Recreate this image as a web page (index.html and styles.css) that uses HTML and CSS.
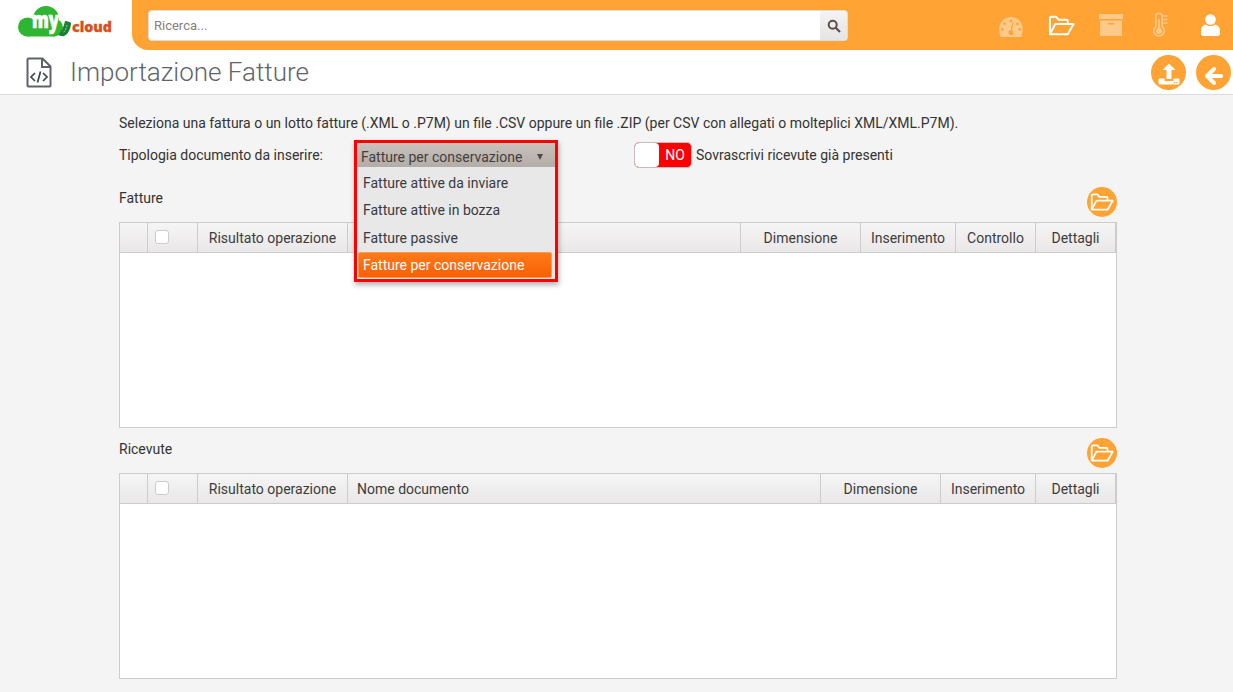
FILE: index.html
```html
<!DOCTYPE html>
<html lang="it">
<head>
<meta charset="utf-8">
<title>Importazione Fatture</title>
<link rel="stylesheet" href="styles.css">
</head>
<body>
<header class="topbar">
  <div class="logo">
    <svg class="logo-svg" width="96" height="34" viewBox="0 0 96 34">
      <g fill="#2fb52f">
        <circle cx="9.500" cy="22" r="9.500"/>
        <circle cx="28" cy="14" r="13"/>
        <circle cx="36" cy="22.500" r="9"/>
        <rect x="9" y="20" width="28" height="11.500"/>
      </g>
      <text class="logo-my" x="14" y="23" textLength="27" lengthAdjust="spacingAndGlyphs">my</text>
      <path fill="#1c7f34" d="M47 16c3 0 5 1 6 2 0 5-3 12-7 13-2 .5-4 0-6-1 3-3 6-8 7-14z"/>
      <path fill="none" stroke="#8fd08f" stroke-width="1" stroke-dasharray="2 1" d="M49 20c-.5 3-2 6-4 8"/>
      <text class="logo-cloud" x="54" y="27" textLength="40" lengthAdjust="spacingAndGlyphs">cloud</text>
    </svg>
  </div>
  <div class="bar">
    <div class="search">
      <span class="search-input">Ricerca...</span>
      <span class="search-btn">
        <svg width="14" height="14" viewBox="0 0 14 14"><circle cx="5.700" cy="5.700" r="4" fill="none" stroke="#5b5048" stroke-width="2"/><path d="M8.700 8.700l4.300 4.300" stroke="#5b5048" stroke-width="2.200"/></svg>
      </span>
    </div>
    <nav class="nav">
      <svg class="nav-icon nav-gauge" width="26" height="20" viewBox="0 0 26 22"><path fill="#ffc98a" fill-rule="evenodd" d="M13 0C6 0 0 6 0 13c0 3 .6 6 1.500 9h23c.9-3 1.500-6 1.500-9 0-7-6-13-13-13zM13 3a1.500 1.500 0 1 1 0 3 1.500 1.500 0 0 1 0-3zM6 6a1.500 1.500 0 1 1 0 3 1.500 1.500 0 0 1 0-3zM20 6a1.500 1.500 0 1 1 0 3 1.500 1.500 0 0 1 0-3zM3.500 12a1.500 1.500 0 1 1 0 3 1.500 1.500 0 0 1 0-3zM22.500 12a1.500 1.500 0 1 1 0 3 1.500 1.500 0 0 1 0-3zM14.500 6l1 .3-1.300 8.500c1 .6 1.500 1.500 1.500 2.500 0 1.600-1.200 2.700-2.700 2.700s-2.700-1.200-2.700-2.700c0-1.300 1-2.400 2.400-2.600z"/></svg>
      <svg class="nav-icon" width="27" height="21" viewBox="0 0 28 21"><path fill="none" stroke="#fff" stroke-width="2" stroke-linejoin="round" d="M2 19V3c0-1 .6-1.500 1.500-1.500h5L11 4.500h8c1 0 1.500.6 1.500 1.500v2.500M2 19.500h18.500L26.500 9H7.500z"/></svg>
      <svg class="nav-icon" width="24" height="22" viewBox="0 0 24 22"><path fill="#ffc98a" fill-rule="evenodd" d="M0 0h24v5H0zM1 6.500h22V22H1zM9 9v1.500h6V9z"/></svg>
      <svg class="nav-icon nav-thermo" width="15" height="26" viewBox="0 0 15 26"><path fill="none" stroke="#ffc98a" stroke-width="1.600" d="M2.800 14.500V4.500a3.200 3.200 0 0 1 6.400 0v10a5.300 5.300 0 1 1-6.400 0zM10.500 4h4M10.500 7.500h4M10.500 11h4"/><circle cx="6" cy="19" r="3" fill="#ffc98a"/><path d="M6 7v11" stroke="#ffc98a" stroke-width="1.800"/></svg>
      <svg class="nav-icon nav-user" width="19" height="22" viewBox="0 0 19 22"><circle cx="9.500" cy="5.500" r="5.300" fill="#fff"/><path fill="#fff" d="M5 10.500c2.500 2 6.500 2 9 0 3 .6 5 3 5 6.500v2.500c0 1.500-1 2.500-2.500 2.500h-14C1 22 0 21 0 19.500V17c0-3.500 2-6 5-6.500z"/></svg>
    </nav>
  </div>
</header>

<section class="titlebar">
  <div class="title-left">
    <svg width="26" height="31" viewBox="0 0 26 31"><path fill="none" stroke="#5f6368" stroke-width="2" stroke-linejoin="round" d="M1.500 2.500c0-.6.400-1 1-1h14l8 8v19c0 .6-.4 1-1 1h-21c-.6 0-1-.4-1-1z"/><path fill="none" stroke="#5f6368" stroke-width="2" d="M16 1.500v8.500h8.500"/><path fill="none" stroke="#3f4347" stroke-width="1.700" d="M9 16l-4 4 4 4M17 16l4 4-4 4M14.500 14.500l-3 11"/></svg>
    <h1 class="title">Importazione Fatture</h1>
  </div>
  <div class="title-actions">
    <span class="round-btn">
      <svg width="24" height="24" viewBox="0 0 24 24"><path fill="#fff" d="M12 2.500L18.500 9h-4v9h-5V9h-4zM1.500 19c0-1 .5-1.500 1.500-1.500h4.500V20h9v-2.500H21c1 0 1.500.5 1.500 1.500v3.500c0 .5-.5 1-1 1h-19c-.5 0-1-.5-1-1z"/><circle cx="17.500" cy="21.500" r=".8" fill="#ffa335"/><circle cx="20" cy="21.500" r=".8" fill="#ffa335"/></svg>
    </span>
    <span class="round-btn">
      <svg class="back-icon" width="22" height="22" viewBox="0 0 22 22"><path fill="none" stroke="#fff" stroke-width="4" stroke-linecap="round" stroke-linejoin="round" d="M11 4l-7 7 7 7M4 11h14"/></svg>
    </span>
  </div>
</section>

<main class="content">
  <p class="intro">Seleziona una fattura o un lotto fatture (.XML o .P7M) un file .CSV oppure un file .ZIP (per CSV con allegati o molteplici XML/XML.P7M).</p>
  <div class="form-row">
    <span class="form-label">Tipologia documento da inserire:</span>
    <div class="select-wrap">
      <div class="dropdown">
        <div class="dropdown-head"><span>Fatture per conservazione</span><span class="caret"></span></div>
        <ul class="dropdown-list">
          <li class="dropdown-item">Fatture attive da inviare</li>
          <li class="dropdown-item">Fatture attive in bozza</li>
          <li class="dropdown-item">Fatture passive</li>
          <li class="dropdown-item dropdown-item-active">Fatture per conservazione</li>
        </ul>
      </div>
    </div>
    <div class="toggle"><span class="toggle-knob"></span><span class="toggle-no">NO</span></div>
    <span class="toggle-label">Sovrascrivi ricevute già presenti</span>
  </div>

  <div class="section-head section-head-first">
    <span>Fatture</span>
    <span class="small-btn"><svg width="24" height="18" viewBox="0 0 28 21"><path fill="none" stroke="#fff" stroke-width="2" stroke-linejoin="round" d="M2 19V3c0-1 .6-1.500 1.500-1.500h5L11 4.500h8c1 0 1.500.6 1.500 1.500v2.500M2 19.500h18.500L26.500 9H7.500z"/></svg></span>
  </div>
  <div class="table">
    <div class="thead thead-fatture">
      <div class="th"></div>
      <div class="th th-check"><span class="checkbox"></span></div>
      <div class="th">Risultato operazione</div>
      <div class="th th-left"></div>
      <div class="th">Dimensione</div>
      <div class="th">Inserimento</div>
      <div class="th">Controllo</div>
      <div class="th">Dettagli</div>
    </div>
  </div>

  <div class="section-head">
    <span>Ricevute</span>
    <span class="small-btn"><svg width="24" height="18" viewBox="0 0 28 21"><path fill="none" stroke="#fff" stroke-width="2" stroke-linejoin="round" d="M2 19V3c0-1 .6-1.500 1.500-1.500h5L11 4.500h8c1 0 1.500.6 1.500 1.500v2.500M2 19.500h18.500L26.500 9H7.500z"/></svg></span>
  </div>
  <div class="table">
    <div class="thead thead-ricevute">
      <div class="th"></div>
      <div class="th th-check"><span class="checkbox"></span></div>
      <div class="th">Risultato operazione</div>
      <div class="th th-left">Nome documento</div>
      <div class="th">Dimensione</div>
      <div class="th">Inserimento</div>
      <div class="th">Dettagli</div>
    </div>
  </div>
</main>
</body>
</html>
```

FILE: styles.css
```css
* { box-sizing: border-box; }
html, body { margin: 0; padding: 0; height: 100%; }
body {
  background: #f4f4f4;
  font-family: Roboto, "Liberation Sans", sans-serif;
  font-size: 14px;
  color: #333;
  overflow: hidden;
}
.topbar { display: flex; height: 50px; background: #fff; }
.logo { width: 132px; flex: none; padding: 5px 0 0 18px; }
.logo-svg { display: block; overflow: visible; }
.logo-my { font: 800 23px "Open Sans", sans-serif; fill: #fff; stroke: #fff; stroke-width: .7px; }
.logo-cloud { font: 800 14px "Open Sans", sans-serif; fill: #d8501e; stroke: #d8501e; stroke-width: .3px; }
.bar {
  flex: 1;
  display: flex;
  align-items: center;
  justify-content: space-between;
  background: #ffa335;
  border-bottom-left-radius: 16px;
  padding: 0 13px 0 16px;
}
.search {
  display: flex;
  width: 700px;
  height: 31px;
  margin-top: 1px;
  background: #fff;
  border: 1px solid #ddd;
  border-radius: 4px;
  overflow: hidden;
}
.search-input { flex: 1; padding: 6px 5px; font-size: 13px; color: #8a8078; line-height: 17px; }
.search-btn {
  width: 27px;
  display: flex;
  align-items: center;
  justify-content: center;
  background: linear-gradient(#f4f4f4, #e6e4e4);
}
.nav { display: flex; align-items: center; gap: 24px; }
.nav-icon { display: block; }
.nav-gauge { margin-top: 3px; }
.nav-thermo { margin-left: 6px; }
.nav-user { margin-left: 9px; }

.titlebar {
  display: flex;
  justify-content: space-between;
  align-items: center;
  height: 45px;
  background: #fff;
  border-bottom: 1px solid #ddd;
  padding: 0 2px 0 26px;
}
.title-left { display: flex; align-items: center; gap: 18px; }
.title { margin: 0; font-size: 26px; font-weight: 300; color: #5f6468; }
.title-actions { display: flex; gap: 10px; margin-top: 1px; }
.round-btn {
  width: 35px;
  height: 35px;
  border-radius: 50%;
  background: #ffa335;
  display: flex;
  align-items: center;
  justify-content: center;
}
.back-icon { margin-top: 7px; }

.content { width: 998px; margin-left: 119px; }
.intro { margin: 0; padding-top: 20px; line-height: 17px; color: #333; }
.form-row { display: flex; align-items: center; height: 27px; margin-top: 11px; }
.form-label { width: 235px; flex: none; margin-top: -4px; }
.select-wrap { position: relative; width: 280px; flex: none; align-self: stretch; }
.dropdown {
  position: absolute;
  left: 0;
  top: -3px;
  width: 204px;
  height: 142px;
  border: 3px solid #f00;
  background: #e8e8e8;
  box-shadow: 1px 3px 5px rgba(0, 0, 0, .3);
  z-index: 5;
}
.dropdown-head {
  display: flex;
  justify-content: space-between;
  align-items: center;
  height: 24px;
  padding: 3px 12px 0 4px;
  background: linear-gradient(#c9c2bc, #b4aca6);
  color: #3f3f3f;
}
.caret {
  width: 0;
  height: 0;
  border-left: 3.500px solid transparent;
  border-right: 3.500px solid transparent;
  border-top: 6px solid #4e4a46;
}
.dropdown-list { list-style: none; margin: 0; padding: 2.500px 0 0; }
.dropdown-item { height: 27.500px; padding: 0 6px; line-height: 27px; color: #3a3a42; }
.dropdown-item-active {
  margin: 0 3px 0 1px;
  padding: 0 4px;
  height: 26px;
  color: #fff;
  background: linear-gradient(#ff7b1a, #f85f05);
  border: 1px solid #ff9a50;
  border-radius: 2px;
  line-height: 24px;
}
.toggle {
  display: flex;
  width: 58px;
  height: 26px;
  flex: none;
  margin-top: -3px;
  border: 1px solid #cdb9b9;
  border-radius: 5px;
  overflow: hidden;
  background: #f00;
}
.toggle-knob { width: 24px; background: #fff; border-radius: 4px; }
.toggle-no { flex: 1; color: #fff; text-align: center; line-height: 24px; }
.toggle-label { margin-left: 4px; margin-top: -4px; }

.section-head {
  display: flex;
  justify-content: space-between;
  align-items: center;
  height: 30px;
  margin-top: 10px;
}
.section-head span:first-child { margin-top: -8px; }
.section-head-first { margin-top: 17px; }
.small-btn {
  width: 30px;
  height: 30px;
  border-radius: 50%;
  background: #ffa335;
  display: flex;
  align-items: center;
  justify-content: center;
}
.table {
  height: 206px;
  margin-top: 5px;
  background: #fff;
  border: 1px solid #ccc;
}
.thead {
  display: grid;
  height: 30px;
  background: linear-gradient(#f6f5f5, #e9e7e7);
  border-bottom: 1px solid #ccc;
}
.thead-fatture { grid-template-columns: 28px 50px 150px 393px 120px 95px 80px 80px; }
.thead-ricevute { grid-template-columns: 28px 50px 150px 473px 120px 95px 80px; }
.th {
  display: flex;
  align-items: center;
  justify-content: center;
  border-right: 1px solid #ccc;
  color: #3c3c3c;
}
.th-left { justify-content: flex-start; padding-left: 9px; }
.th-check { padding-bottom: 2px; padding-right: 21px; }
.checkbox {
  width: 14px;
  height: 14px;
  background: #fff;
  border: 1px solid #ccc;
  border-radius: 3px;
}
```
